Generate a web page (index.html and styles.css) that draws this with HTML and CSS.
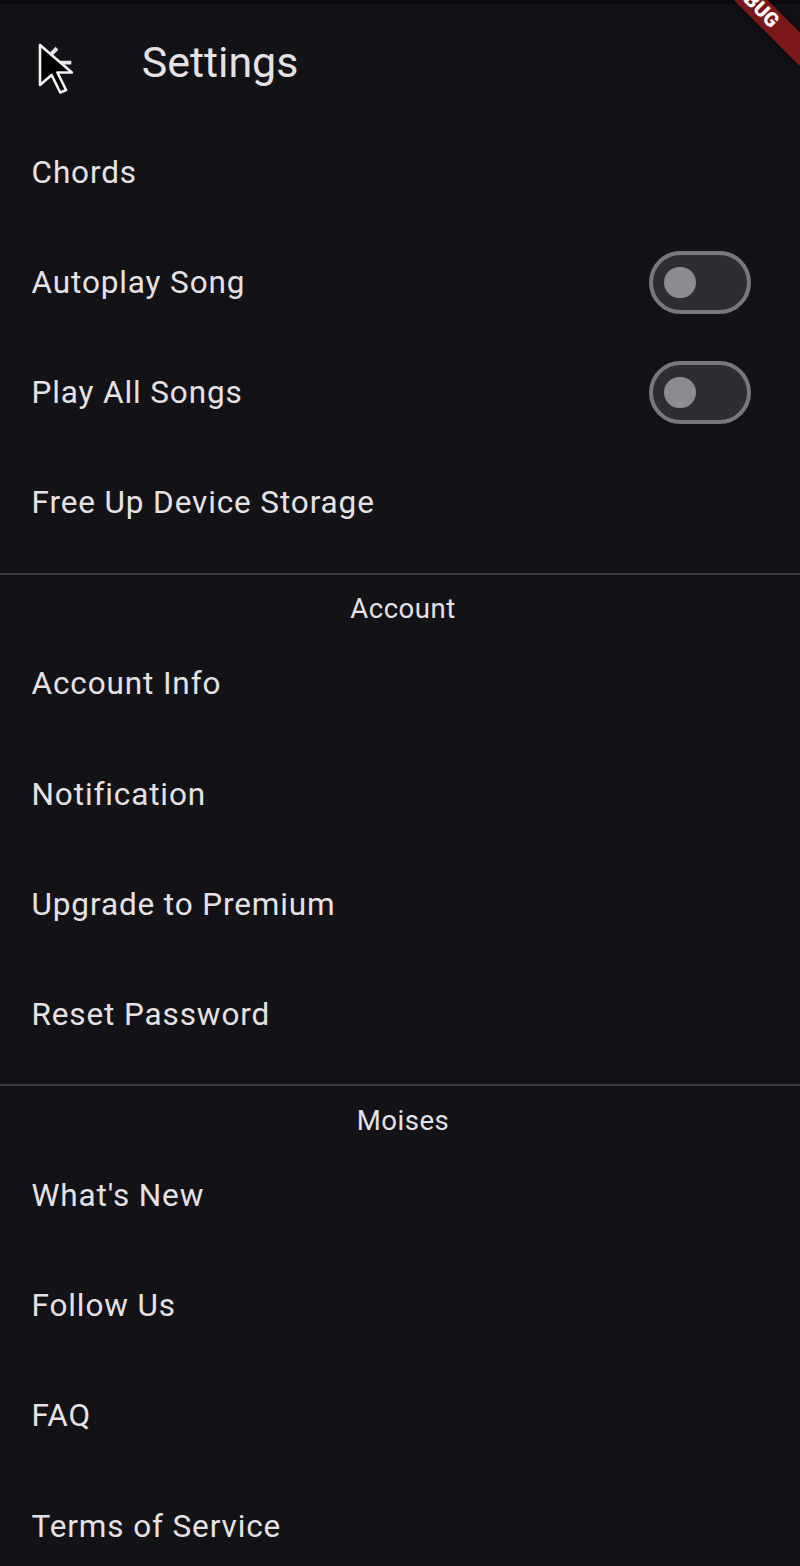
FILE: index.html
```html
<!DOCTYPE html>
<html lang="en">
<head>
<meta charset="utf-8">
<title>Settings</title>
<link rel="stylesheet" href="styles.css">
</head>
<body>
<div class="screen">
  <div class="status"></div>
  <header class="appbar">
    <div class="leading">
      <svg viewBox="0 0 24 24" class="back"><path d="M20 11H7.83l5.59-5.59L12 4l-8 8 8 8 1.41-1.41L7.83 13H20v-2z" fill="#e6e1e5"/></svg>
    </div>
    <div class="title">Settings</div>
  </header>
  <main class="list">
    <div class="item">Chords</div>
    <div class="item"><span>Autoplay Song</span><div class="switch"><div class="thumb"></div></div></div>
    <div class="item"><span>Play All Songs</span><div class="switch"><div class="thumb"></div></div></div>
    <div class="item">Free Up Device Storage</div>
    <div class="divider"></div>
    <div class="header">Account</div>
    <div class="item">Account Info</div>
    <div class="item">Notification</div>
    <div class="item">Upgrade to Premium</div>
    <div class="item">Reset Password</div>
    <div class="divider"></div>
    <div class="header">Moises</div>
    <div class="item">What's New</div>
    <div class="item">Follow Us</div>
    <div class="item">FAQ</div>
    <div class="item">Terms of Service</div>
  </main>
  <svg class="cursor" viewBox="0 0 36 52" width="36" height="52"><path d="M2 2 L2 42 L13.6 32 L22.3 49.5 L28.1 47 L19.4 29.5 L33.9 29.5 Z" fill="#000" stroke="#f2f2f2" stroke-width="2.6" stroke-linejoin="round"/></svg>
  <div class="banner">DEBUG</div>
</div>
</body>
</html>
```
FILE: styles.css
```css
* { box-sizing: border-box; }
html, body { margin: 0; padding: 0; }
body {
  background: #131217;
  font-family: Roboto, "Noto Sans", sans-serif;
  color: #e6e1e5;
}
.screen {
  position: relative;
  width: 800px;
  height: 1566px;
  overflow: hidden;
  background: #131217;
}
.status {
  height: 7px;
  border-top: 4px solid #0b0a0e;
}
.appbar {
  height: 110.2px;
  display: flex;
  align-items: center;
}
.leading {
  width: 110.2px;
  height: 110.2px;
  display: flex;
  align-items: center;
  justify-content: center;
}
.back {
  width: 47.2px;
  height: 47.2px;
}
.title {
  margin-left: 31.5px;
  font-size: 42.9px;
  line-height: 55px;
  font-weight: 400;
}
.item {
  height: 110.2px;
  padding: 0 31.5px;
  display: flex;
  align-items: center;
  justify-content: space-between;
  font-size: 31.5px;
  letter-spacing: 0.88px;
  line-height: 47.2px;
}
.divider {
  height: 31.5px;
  display: flex;
  align-items: center;
}
.divider::before {
  content: "";
  display: block;
  width: 100%;
  height: 2px;
  background: #3a393f;
}
.header {
  height: 39.4px;
  line-height: 39.4px;
  text-align: center;
  padding-left: 6px;
  font-size: 27.55px;
  letter-spacing: 0.5px;
}
.switch {
  width: 102.3px;
  height: 63px;
  border: 4px solid #79787e;
  background: #2f2d33;
  border-radius: 32px;
  margin-right: 17.5px;
  display: flex;
  align-items: center;
  padding-left: 11.75px;
  flex: none;
}
.thumb {
  width: 31.5px;
  height: 31.5px;
  border-radius: 50%;
  background: #8e8c93;
}
.cursor {
  position: absolute;
  left: 38px;
  top: 43px;
}
.banner {
  position: absolute;
  left: 674px;
  top: -10.5px;
  width: 157.4px;
  height: 23.6px;
  line-height: 23.6px;
  transform: rotate(45deg);
  background: rgba(183, 28, 28, 0.63);
  box-shadow: 0 0 12px rgba(0, 0, 0, 0.5);
  color: #fff;
  text-align: center;
  font-size: 20px;
  font-weight: 900;
}
```
